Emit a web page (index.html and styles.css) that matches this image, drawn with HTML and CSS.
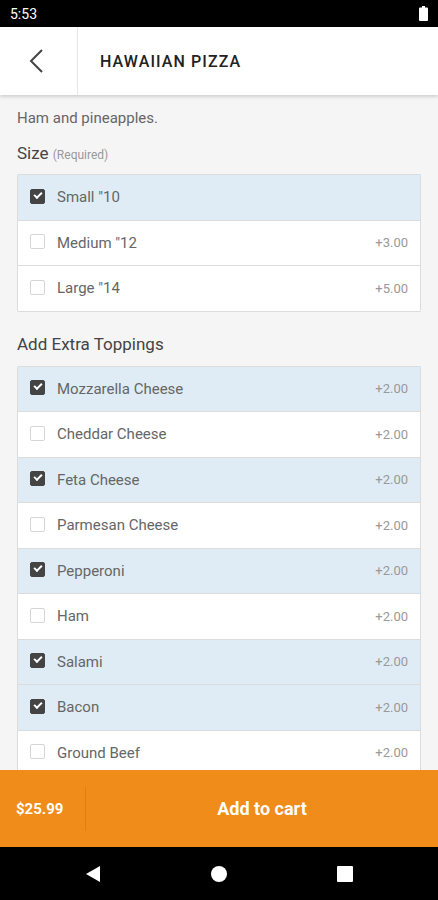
FILE: index.html
```html
<!DOCTYPE html>
<html lang="en">

<head>
    <meta charset="UTF-8">
    <title>Hawaiian Pizza</title>
    <link rel="stylesheet" href="styles.css">
</head>

<body>
    <div class="status-bar">
        <span class="time">5:53</span>
        <svg class="battery" width="9" height="15" viewBox="0 0 9 15">
            <rect x="3" y="0" width="3" height="2" fill="#fff" />
            <rect x="0" y="1.5" width="9" height="13.5" rx="1" fill="#fff" />
        </svg>
    </div>

    <div class="header">
        <div class="back-btn">
            <svg width="20" height="26" viewBox="0 0 20 26">
                <polyline points="15,2 4,13 15,24" fill="none" stroke="#444" stroke-width="2" />
            </svg>
        </div>
        <div class="title">HAWAIIAN PIZZA</div>
    </div>

    <div class="content">
        <p class="desc">Ham and pineapples.</p>

        <div class="section-title">Size <span class="hint">(Required)</span></div>
        <div class="option-list">
            <div class="option selected"><span class="check"></span><span class="name">Small "10</span><span class="price"></span></div>
            <div class="option"><span class="check"></span><span class="name">Medium "12</span><span class="price">+3.00</span></div>
            <div class="option"><span class="check"></span><span class="name">Large "14</span><span class="price">+5.00</span></div>
        </div>

        <div class="section-title second">Add Extra Toppings</div>
        <div class="option-list">
            <div class="option selected"><span class="check"></span><span class="name">Mozzarella Cheese</span><span class="price">+2.00</span></div>
            <div class="option"><span class="check"></span><span class="name">Cheddar Cheese</span><span class="price">+2.00</span></div>
            <div class="option selected"><span class="check"></span><span class="name">Feta Cheese</span><span class="price">+2.00</span></div>
            <div class="option"><span class="check"></span><span class="name">Parmesan Cheese</span><span class="price">+2.00</span></div>
            <div class="option selected"><span class="check"></span><span class="name">Pepperoni</span><span class="price">+2.00</span></div>
            <div class="option"><span class="check"></span><span class="name">Ham</span><span class="price">+2.00</span></div>
            <div class="option selected"><span class="check"></span><span class="name">Salami</span><span class="price">+2.00</span></div>
            <div class="option selected"><span class="check"></span><span class="name">Bacon</span><span class="price">+2.00</span></div>
            <div class="option"><span class="check"></span><span class="name">Ground Beef</span><span class="price">+2.00</span></div>
        </div>
    </div>

    <div class="cart-bar">
        <div class="total">$25.99</div>
        <div class="add-btn">Add to cart</div>
    </div>

    <div class="nav-bar">
        <svg width="18" height="18" viewBox="0 0 18 18">
            <polygon points="16,1 16,17 2,9" fill="#fff" />
        </svg>
        <svg width="18" height="18" viewBox="0 0 18 18">
            <circle cx="9" cy="9" r="8" fill="#fff" />
        </svg>
        <svg width="18" height="18" viewBox="0 0 18 18">
            <rect x="1" y="1" width="16" height="16" rx="1" fill="#fff" />
        </svg>
    </div>
</body>

</html>
```

FILE: styles.css
```css
body {
    font-family: Roboto, 'Liberation Sans', Arial, sans-serif;
    background-color: #f5f5f5;
    margin: 0;
    height: 900px;
    display: flex;
    flex-direction: column;
    overflow: hidden;
}

.status-bar {
    height: 27px;
    flex: none;
    background-color: #000;
    color: #fff;
    display: flex;
    align-items: center;
    justify-content: space-between;
    padding: 0 10px;
}

.time {
    font-size: 14px;
}

.battery {
    margin-top: -1px;
}

.header {
    height: 68px;
    flex: none;
    background-color: #fff;
    display: flex;
    align-items: center;
    box-shadow: 0 2px 3px rgba(0, 0, 0, 0.15);
    position: relative;
    z-index: 1;
}

.back-btn {
    width: 78px;
    height: 100%;
    border-right: 1px solid #e6e6e6;
    display: flex;
    align-items: center;
    justify-content: center;
    box-sizing: border-box;
    padding-right: 4px;
}

.title {
    margin-left: 22px;
    font-size: 16px;
    font-weight: 500;
    letter-spacing: 1.1px;
    color: #222;
}

.content {
    flex: 1;
    overflow: hidden;
    padding: 0 17px;
}

.desc {
    margin: 13px 0 0;
    font-size: 15px;
    line-height: 20px;
    color: #666;
}

.section-title {
    margin: 14px 0 8px;
    font-size: 17px;
    line-height: 22px;
    color: #444;
}

.section-title.second {
    margin-top: 21px;
    margin-bottom: 11px;
}

.hint {
    font-size: 12px;
    color: #999;
}

.option-list {
    background-color: #fff;
    border: 1px solid #dcdcdc;
    border-bottom: none;
    border-radius: 2px;
}

.option {
    height: 44.5px;
    border-bottom: 1px solid #dcdcdc;
    display: flex;
    align-items: center;
    padding: 0 12px 0 12px;
}

.option.selected {
    background-color: #dfecf5;
}

.check {
    width: 13px;
    height: 13px;
    border: 1px solid #d5d5d5;
    border-radius: 2px;
    background-color: #fff;
    margin-top: -2px;
    flex: none;
    box-sizing: content-box;
    position: relative;
}

.option.selected .check {
    background-color: #444;
    border-color: #444;
}

.option.selected .check::after {
    content: '';
    position: absolute;
    left: 3px;
    top: 2px;
    width: 6px;
    height: 3px;
    border-left: 2px solid #fff;
    border-bottom: 2px solid #fff;
    transform: rotate(-45deg);
}

.name {
    flex: 1;
    margin-left: 12px;
    font-size: 15px;
    color: #666;
}

.price {
    font-size: 13px;
    color: #999;
}

.cart-bar {
    height: 77px;
    flex: none;
    background-color: #ef8c1a;
    color: #fff;
    font-weight: 700;
    display: flex;
    align-items: center;
}

.total {
    width: 86px;
    box-sizing: border-box;
    padding-left: 16px;
    font-size: 15px;
    border-right: 1px solid #e07e12;
    height: 44px;
    line-height: 44px;
}

.add-btn {
    flex: 1;
    text-align: center;
    font-size: 18px;
}

.nav-bar {
    height: 53px;
    flex: none;
    background-color: #000;
    display: flex;
    align-items: center;
    justify-content: space-between;
    padding: 0 84px;
}
```
